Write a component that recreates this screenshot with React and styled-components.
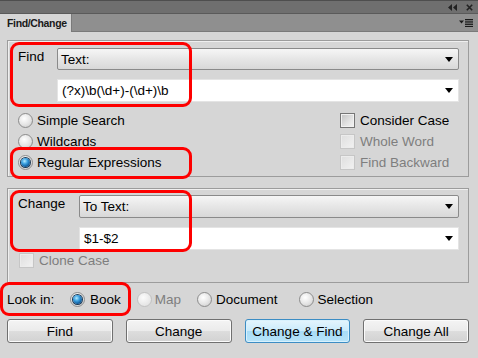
import React from "react";
import styled, { createGlobalStyle } from "styled-components";

const Global = createGlobalStyle`
  html, body { margin: 0; padding: 0; }
  body { background: #d6d6d6; font-family: "Liberation Sans", Arial, sans-serif; font-size: 13.5px; color: #000; }
`;

const Root = styled.div`
  position: relative;
  width: 478px;
  height: 358px;
  background: #d6d6d6;
  overflow: hidden;
`;

const TopBar = styled.div`
  height: 14px;
  box-sizing: border-box;
  background: #6f6f6f;
  border-top: 1px solid #4e4e4e;
  border-bottom: 1px solid #5a5a5a;
  display: flex;
  align-items: center;
  justify-content: flex-end;
  gap: 9px;
  padding-right: 5px;
`;

const TabRow = styled.div`
  height: 18px;
  box-sizing: border-box;
  background: #8f8f8f;
  border-bottom: 1px solid #7a7a7a;
  display: flex;
  align-items: stretch;
  justify-content: space-between;
`;

const Tab = styled.div`
  width: 72px;
  background: #d6d6d6;
  box-sizing: border-box;
  padding-left: 7px;
  font-size: 10.5px;
  letter-spacing: -0.35px;
  font-weight: bold;
  color: #1a1a1a;
  display: flex;
  align-items: center;
  margin-bottom: -1px;
  border-right: 1px solid #7a7a7a;
  white-space: nowrap;
`;

const MenuIcon = styled.div`
  display: flex;
  align-items: center;
  padding-right: 5px;
`;

const Content = styled.div`
  padding: 8px 9px 0 7px;
  display: flex;
  flex-direction: column;
`;

const GroupBox = styled.div`
  border: 1px solid #9c9c9c;
  box-shadow: inset 1px 1px 0 #efefef;
  height: ${(p) => p.$h}px;
  box-sizing: border-box;
  padding: ${(p) => p.$pt}px 9px 0 10px;
  margin-top: ${(p) => p.$mt || 0}px;
  display: flex;
  flex-direction: column;
`;

const FieldRow = styled.div`
  display: flex;
  align-items: flex-start;
  margin-top: ${(p) => p.$mt || 0}px;
`;

const Label = styled.div`
  width: ${(p) => p.$w}px;
  flex: none;
  line-height: 15px;
  padding-top: 1px;
`;

const Dropdown = styled.div`
  flex: 1;
  height: ${(p) => p.$h || 22}px;
  box-sizing: border-box;
  border: 1px solid #8a8a8a;
  border-radius: 2px;
  background: linear-gradient(#f6f6f6, #e6e6e6 50%, #d8d8d8);
  display: flex;
  align-items: center;
  justify-content: space-between;
  padding: 0 5px 0 3px;
`;

const TextField = styled.div`
  flex: 1;
  height: 23px;
  box-sizing: border-box;
  background: #fff;
  border: 1px solid #e4e4e4;
  display: flex;
  align-items: center;
  justify-content: space-between;
  padding: 0 5px 0 4px;
`;

const Arrow = styled.span`
  width: 0;
  height: 0;
  border-left: 4.5px solid transparent;
  border-right: 4.5px solid transparent;
  border-top: 5px solid #000;
`;

const Options = styled.div`
  display: flex;
  margin-top: 8px;
`;

const OptionCol = styled.div`
  display: flex;
  flex-direction: column;
  flex: none;
  width: ${(p) => p.$w}px;
`;

const OptionRow = styled.label`
  display: flex;
  align-items: center;
  height: 21px;
  gap: ${(p) => p.$gap ?? 4}px;
  color: ${(p) => (p.$disabled ? "#7e7e7e" : "#000")};
  padding-left: ${(p) => p.$pl || 0}px;
  margin-left: ${(p) => p.$ml || 0}px;
  white-space: nowrap;
`;

const Radio = styled.span`
  width: 15px;
  height: 15px;
  box-sizing: border-box;
  border-radius: 50%;
  flex: none;
  border: 1px solid ${(p) => (p.$disabled ? "#c2c2c2" : "#8c8c8c")};
  background: ${(p) =>
    p.$disabled
      ? "radial-gradient(circle at 40% 35%, #fbfbfb, #e6e6e6 70%)"
      : "radial-gradient(circle at 40% 35%, #ffffff, #e4e4e4 55%, #c6c6c6)"};
  display: flex;
  align-items: center;
  justify-content: center;
  &::after {
    content: "";
    display: ${(p) => (p.$checked ? "block" : "none")};
    width: 9px;
    height: 9px;
    border-radius: 50%;
    background: radial-gradient(circle at 40% 35%, #b5ecff 0%, #3ba0e0 35%, #0e5a9a 70%, #0a2f55 100%);
    box-shadow: 0 0 0 1px #1d3a55;
  }
`;

const Check = styled.span`
  width: 15px;
  height: 15px;
  box-sizing: border-box;
  flex: none;
  border: 1px solid ${(p) => (p.$disabled ? "#c6c6c6" : "#767676")};
  background: ${(p) =>
    p.$disabled
      ? "linear-gradient(135deg, #dedede, #f2f2f2)"
      : "linear-gradient(135deg, #c2c2c2, #e4e4e4 60%, #f4f4f4)"};
  box-shadow: inset 0 0 0 1px ${(p) => (p.$disabled ? "#ececec" : "#f2f2f2")};
`;

const LookRow = styled.div`
  display: flex;
  align-items: center;
  height: 30px;
  margin-top: 1px;
`;

const LookLabel = styled.span`
  width: 63px;
  flex: none;
`;

const LookItems = styled.div`
  display: flex;
  align-items: center;
  gap: ${(p) => p.$gap}px;
`;

const Buttons = styled.div`
  display: grid;
  grid-template-columns: repeat(4, 1fr);
  gap: 13px;
  margin-top: 5px;
`;

const Button = styled.button`
  height: 24px;
  font-family: "Liberation Sans", Arial, sans-serif;
  font-size: 13.5px;
  color: #000;
  border-radius: 3px;
  border: 1px solid ${(p) => (p.$primary ? "#3c8dc4" : "#707070")};
  background: ${(p) =>
    p.$primary
      ? "linear-gradient(#e5f5fd, #c9ebfc 50%, #a8dcf7 51%, #b7e4fa)"
      : "linear-gradient(#f4f4f4, #ebebeb 50%, #dddddd 51%, #d2d2d2)"};
  box-shadow: inset 0 0 0 1px ${(p) => (p.$primary ? "#d8f1fd" : "#fbfbfb")};
  padding: 0;
`;

const Highlight = styled.div`
  position: absolute;
  left: ${(p) => p.$x}px;
  top: ${(p) => p.$y}px;
  width: ${(p) => p.$w}px;
  height: ${(p) => p.$h}px;
  box-sizing: border-box;
  border: 3px solid #fe0000;
  border-radius: 9px;
  pointer-events: none;
`;

const RadioOption = ({ label, checked, disabled, gap, pl, ml }) => (
  <OptionRow $disabled={disabled} $gap={gap} $pl={pl} $ml={ml}>
    <Radio $checked={checked} $disabled={disabled} />
    <span>{label}</span>
  </OptionRow>
);

const CheckOption = ({ label, disabled, pl }) => (
  <OptionRow $disabled={disabled} $pl={pl} $gap={5}>
    <Check $disabled={disabled} />
    <span>{label}</span>
  </OptionRow>
);

export default function App() {
  return (
    <Root>
      <Global />
      <TopBar>
        <svg width="9" height="7" viewBox="0 0 9 7">
          <path d="M4 0 L0 3.5 L4 7 Z M9 0 L5 3.5 L9 7 Z" fill="#222" />
        </svg>
        <svg width="7" height="7" viewBox="0 0 7 7">
          <path d="M0.8 0.8 L6.2 6.2 M6.2 0.8 L0.8 6.2" stroke="#222" strokeWidth="1.6" />
        </svg>
      </TopBar>
      <TabRow>
        <Tab>Find/Change</Tab>
        <MenuIcon>
          <svg width="14" height="8" viewBox="0 0 14 8">
            <path d="M0 1.5 L5 1.5 L2.5 4.5 Z" fill="#1a1a1a" />
            <rect x="6" y="0" width="8" height="1.3" fill="#1a1a1a" />
            <rect x="6" y="2.3" width="8" height="1.3" fill="#1a1a1a" />
            <rect x="6" y="4.6" width="8" height="1.3" fill="#1a1a1a" />
            <rect x="6" y="6.9" width="8" height="1.1" fill="#1a1a1a" />
          </svg>
        </MenuIcon>
      </TabRow>
      <Content>
        <GroupBox $h={137} $pt={7}>
          <FieldRow>
            <Label $w={39}>Find</Label>
            <Dropdown>
              <span>Text:</span>
              <Arrow />
            </Dropdown>
          </FieldRow>
          <FieldRow $mt={9}>
            <Label $w={39} />
            <TextField>
              <span>(?x)\b(\d+)-(\d+)\b</span>
              <Arrow />
            </TextField>
          </FieldRow>
          <Options>
            <OptionCol $w={322}>
              <RadioOption label="Simple Search" />
              <RadioOption label="Wildcards" />
              <RadioOption label="Regular Expressions" checked />
            </OptionCol>
            <OptionCol $w={110}>
              <CheckOption label="Consider Case" />
              <CheckOption label="Whole Word" disabled />
              <CheckOption label="Find Backward" disabled />
            </OptionCol>
          </Options>
        </GroupBox>
        <GroupBox $h={95} $pt={6} $mt={11}>
          <FieldRow>
            <Label $w={61}>Change</Label>
            <Dropdown $h={23}>
              <span>To Text:</span>
              <Arrow />
            </Dropdown>
          </FieldRow>
          <FieldRow $mt={9}>
            <Label $w={61} />
            <TextField>
              <span>$1-$2</span>
              <Arrow />
            </TextField>
          </FieldRow>
          <OptionCol $w={120}>
            <CheckOption label="Clone Case" disabled pl={1} />
          </OptionCol>
        </GroupBox>
        <LookRow>
          <LookLabel>Look in:</LookLabel>
          <LookItems $gap={16}>
            <RadioOption label="Book" checked gap={5} />
            <RadioOption label="Map" disabled gap={3} />
            <RadioOption label="Document" gap={4} />
            <RadioOption label="Selection" gap={4} ml={5} />
          </LookItems>
        </LookRow>
        <Buttons>
          <Button>Find</Button>
          <Button>Change</Button>
          <Button $primary>Change &amp; Find</Button>
          <Button>Change All</Button>
        </Buttons>
      </Content>
      <Highlight $x={10} $y={42} $w={182} $h={65} />
      <Highlight $x={10} $y={147} $w={182} $h={32} />
      <Highlight $x={10} $y={190} $w={182} $h={62} />
      <Highlight $x={0} $y={282} $w={131} $h={34} />
    </Root>
  );
}
